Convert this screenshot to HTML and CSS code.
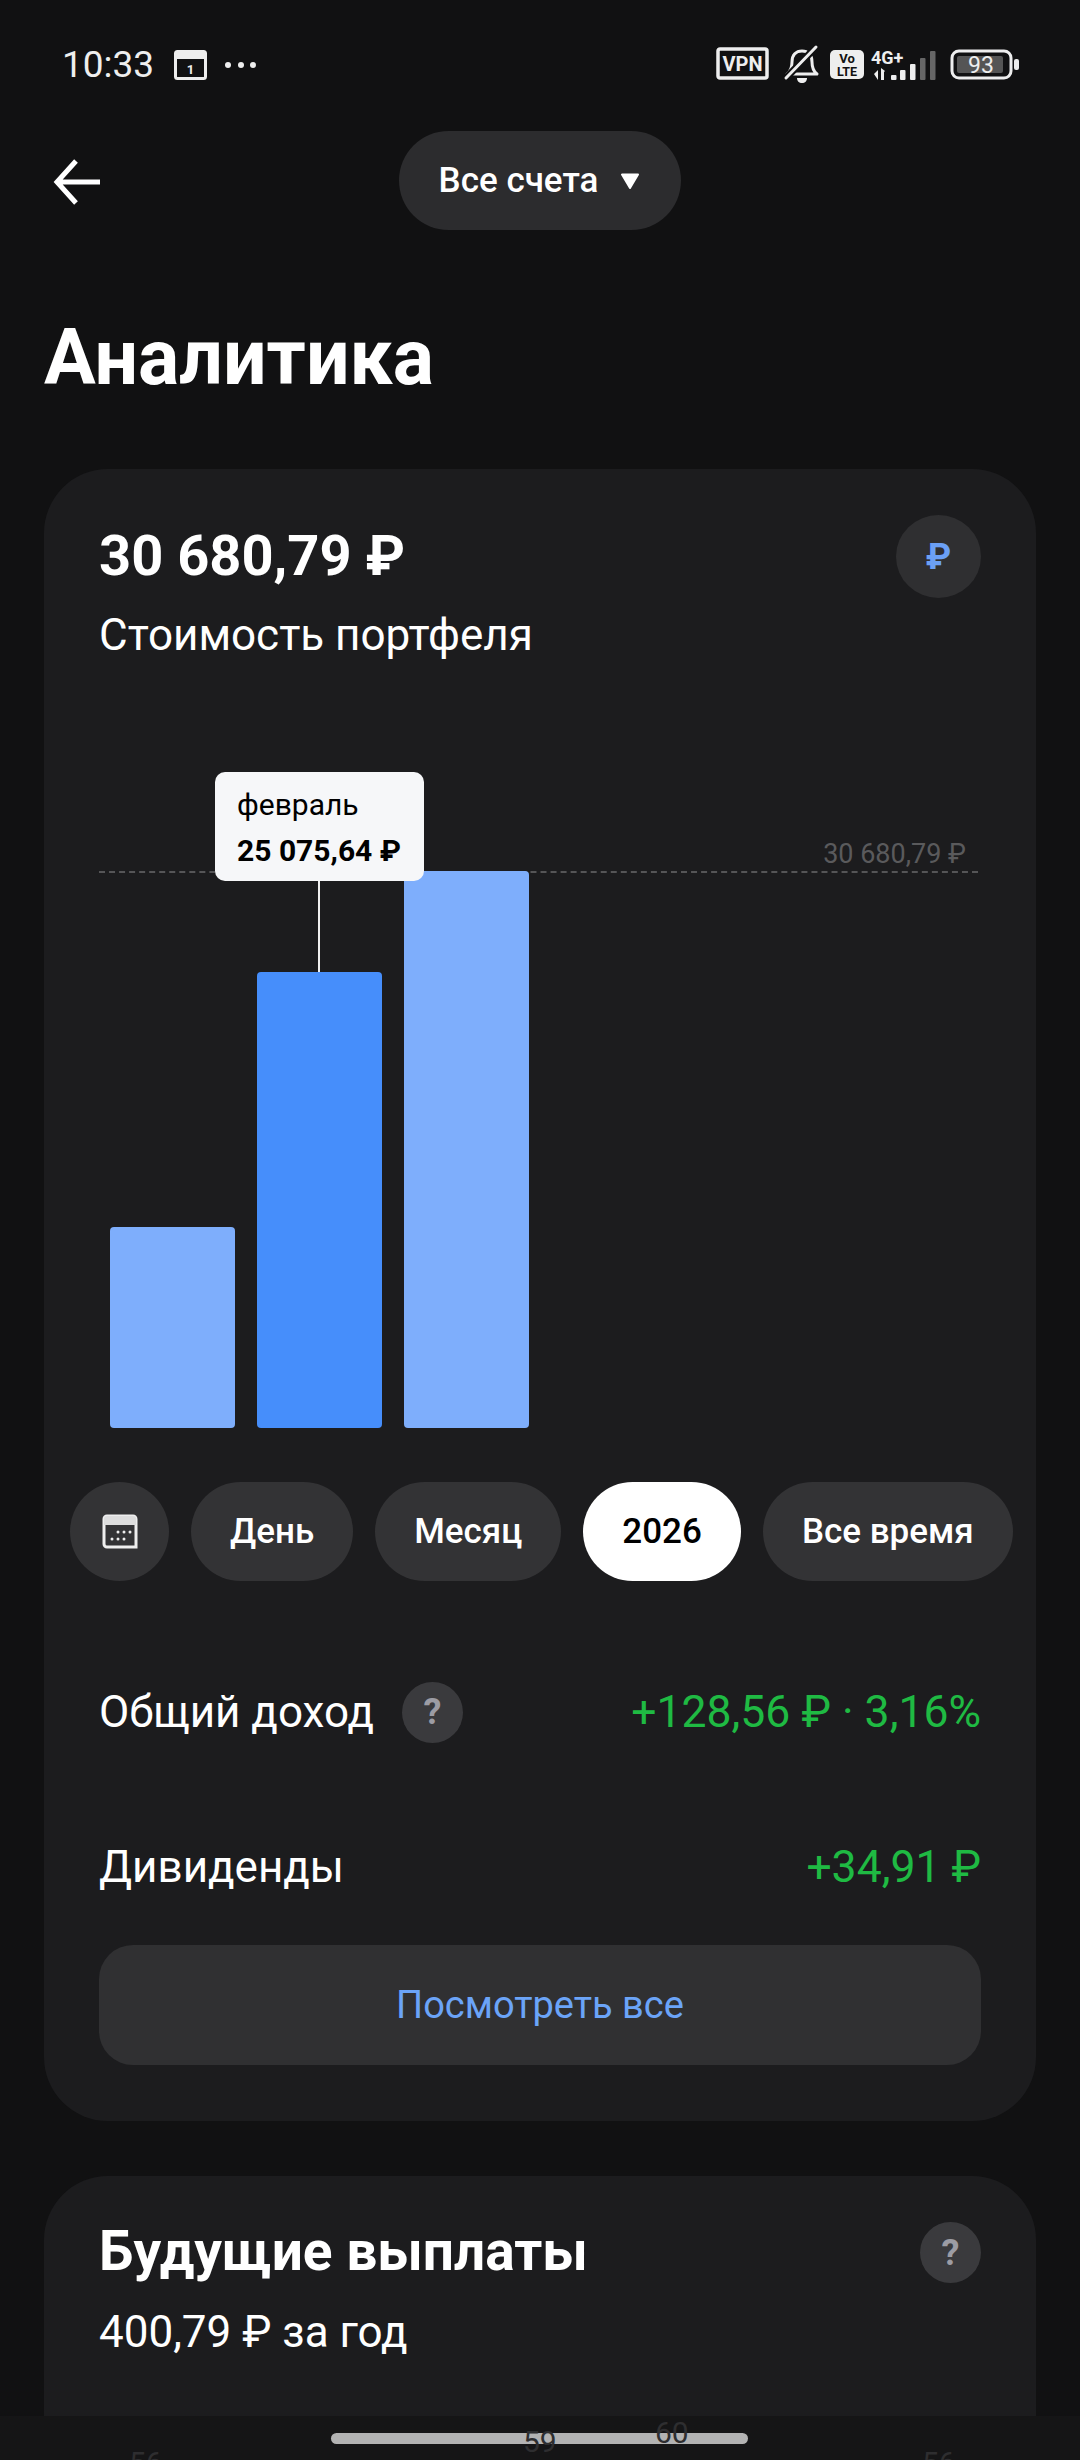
FILE: index.html
```html
<!DOCTYPE html>
<html lang="ru">
<head>
<meta charset="utf-8">
<title>Аналитика</title>
<link rel="stylesheet" href="styles.css">
</head>
<body>
<div class="page">
  <div class="status">
    <div class="status-left">
      <span class="time">10:33</span>
      <svg class="ic-cal" width="33" height="30" viewBox="0 0 33 30"><rect x="1.5" y="1.5" width="30" height="27" rx="2" fill="none" stroke="#eee" stroke-width="3"/><rect x="1" y="1" width="31" height="8" fill="#eee"/><text x="16.5" y="24" font-size="13" font-weight="700" fill="#eee" text-anchor="middle" font-family="Roboto">1</text></svg>
      <span class="dots"><i></i><i></i><i></i></span>
    </div>
    <div class="status-right">
      <svg width="53" height="33" viewBox="0 0 53 33"><rect x="2" y="2" width="49" height="29" rx="2" fill="none" stroke="#eee" stroke-width="3.5"/><text x="26.5" y="23.500" font-size="20" font-weight="700" fill="#eee" text-anchor="middle" font-family="Roboto">VPN</text></svg>
      <svg class="ic-bell" width="36" height="39" viewBox="0 0 36 39"><path d="M3 29c4-3 5-6 5-12 0-7 4-11 10-11s10 4 10 11c0 6 1 9 5 12z" fill="none" stroke="#eee" stroke-width="3" stroke-linejoin="round"/><path d="M13 33h10c0 3-2 5-5 5s-5-2-5-5z" fill="#eee"/><path d="M2 33 32 2" stroke="#111112" stroke-width="7"/><path d="M2 33 32 2" stroke="#eee" stroke-width="3" stroke-linecap="round"/></svg>
      <svg class="ic-volte" width="34" height="29" viewBox="0 0 34 29"><rect width="34" height="29" rx="5" fill="#eee"/><text x="17" y="13" font-size="13" font-weight="700" fill="#111" text-anchor="middle" font-family="Roboto">Vo</text><text x="17" y="26" font-size="12.5" font-weight="700" fill="#111" text-anchor="middle" font-family="Roboto">LTE</text></svg>
      <svg class="ic-net" width="66" height="31" viewBox="0 0 66 31"><text x="0" y="14" font-size="18" font-weight="700" fill="#eee" font-family="Roboto">4G+</text><path d="M3 24 7 20v10zM10 18l4 3-1 1v8h-3z" fill="#eee"/><rect x="20" y="25" width="5.500" height="5" rx="1" fill="#eee"/><rect x="29" y="20" width="5.500" height="10" rx="1" fill="#eee"/><rect x="39" y="14" width="5.500" height="16" rx="1" fill="#eee"/><rect x="49" y="8" width="5.500" height="22" rx="1" fill="#666"/><rect x="59" y="1" width="5.500" height="29" rx="1" fill="#666"/></svg>
      <svg class="ic-bat" width="70" height="31" viewBox="0 0 70 31"><rect x="2" y="2" width="59" height="27" rx="7" fill="none" stroke="#eee" stroke-width="3"/><rect x="7" y="7" width="46" height="17" rx="2" fill="#555"/><rect x="64" y="10" width="5" height="11" rx="2" fill="#eee"/><text x="31" y="23.500" font-size="23" fill="#eee" text-anchor="middle" font-family="Roboto">93</text></svg>
    </div>
  </div>

  <header class="topbar">
    <svg class="back" width="48" height="46" viewBox="0 0 48 46"><path d="M46 23H4M22 2 3 23l19 21" fill="none" stroke="#fff" stroke-width="5"/></svg>
    <div class="account"><span>Все счета</span><svg width="20" height="16" viewBox="0 0 20 16"><path d="M2 1.500h16L10 15z" fill="#fff" stroke="#fff" stroke-width="2" stroke-linejoin="round"/></svg></div>
  </header>

  <h1 class="title">Аналитика</h1>

  <section class="card card-main">
    <div class="head">
      <div>
        <div class="amount">30 680,79 ₽</div>
        <div class="sub">Стоимость портфеля</div>
      </div>
      <div class="cur">₽</div>
    </div>
    <div class="chart">
      <div class="limit"><span>30 680,79 ₽</span></div>
      <div class="bars">
        <div class="bar bar-1"></div>
        <div class="bar bar-2"></div>
        <div class="bar bar-3"></div>
      </div>
      <div class="stem"></div>
      <div class="tip">
        <div class="tip-m">февраль</div>
        <div class="tip-v">25 075,64 ₽</div>
      </div>
    </div>
    <div class="chips">
      <div class="chip chip-ic"><svg width="36" height="36" viewBox="0 0 36 36"><path d="M2 5a3 3 0 0 1 3-3h26a3 3 0 0 1 3 3v28H5a3 3 0 0 1-3-3z" fill="none" stroke="#eee" stroke-width="3"/><path d="M2 5a3 3 0 0 1 3-3h26a3 3 0 0 1 3 3v6H2z" fill="#ddd"/><g fill="#eee"><circle cx="16" cy="18" r="1.500"/><circle cx="22" cy="18" r="1.500"/><circle cx="28" cy="18" r="1.500"/><circle cx="10" cy="25" r="1.500"/><circle cx="16" cy="25" r="1.500"/><circle cx="22" cy="25" r="1.500"/></g></svg></div>
      <div class="chip">День</div>
      <div class="chip">Месяц</div>
      <div class="chip chip-on">2026</div>
      <div class="chip">Все время</div>
    </div>
    <div class="row row-1">
      <div class="row-l"><span>Общий доход</span><span class="q">?</span></div>
      <div class="pos">+128,56 ₽ · 3,16%</div>
    </div>
    <div class="row row-2">
      <div class="row-l"><span>Дивиденды</span></div>
      <div class="pos">+34,91 ₽</div>
    </div>
    <div class="more">Посмотреть все</div>
  </section>

  <section class="card card-next">
    <div class="head-next">
      <h2>Будущие выплаты</h2>
      <span class="q">?</span>
    </div>
    <div class="sub sub-next">400,79 ₽ за год</div>
  </section>
</div>

<div class="navbar">
  <span class="tick t1">56</span><span class="tick t2">59</span><span class="tick t3">60</span><span class="tick t4">56</span>
  <div class="pill"></div>
</div>
</body>
</html>
```
FILE: styles.css
```css
* { box-sizing: border-box; }
html, body { margin: 0; padding: 0; }
body {
  width: 1080px;
  height: 2460px;
  overflow: hidden;
  position: relative;
  background: #111112;
  color: #fff;
  font-family: Roboto, "Noto Sans", sans-serif;
}
svg { overflow: visible; flex: none; }
.page { padding: 0 44px; }

.status {
  height: 131px;
  margin: 0 16px 0 18px;
  padding: 46px 0 0;
  display: flex;
  justify-content: space-between;
  align-items: flex-start;
}
.status-left { display: flex; align-items: center; height: 36px; margin-top: 1px; }
.time { font-size: 37px; color: #eee; line-height: 36px; }
.ic-cal { margin-left: 20px; }
.dots { display: flex; gap: 6.500px; margin-left: 18px; }
.dots i { width: 6px; height: 6px; border-radius: 50%; background: #eee; }
.status-right { display: flex; align-items: flex-start; margin-top: 1px; }
.ic-bell { margin-left: 15px; margin-top: -2px; }
.ic-volte { margin-left: 10px; margin-top: 3px; }
.ic-net { margin-left: 7px; margin-top: 3px; }
.ic-bat { margin-left: 13px; margin-top: 2px; }

.topbar {
  height: 99px;
  display: flex;
  align-items: center;
  position: relative;
  justify-content: center;
}
.back { position: absolute; left: 10px; top: 28px; }
.account {
  width: 282px;
  height: 99px;
  margin-left: -1px;
  border-radius: 50px;
  background: #2c2c2e;
  display: flex;
  align-items: center;
  justify-content: center;
  gap: 22px;
  font-size: 35px;
  font-weight: 500;
}
.title {
  margin: 86px 0 0;
  font-size: 77px;
  line-height: 84px;
  font-weight: 700;
  color: #fff;
}

.card { background: #1c1c1e; border-radius: 64px; }
.card-main { margin-top: 69px; height: 1652px; padding: 46px 55px 0; }
.card-next { margin-top: 55px; height: 400px; padding: 46px 55px 0; }

.head { display: flex; justify-content: space-between; align-items: flex-start; }
.amount { font-size: 56px; line-height: 76px; font-weight: 700; margin-top: 3px; }
.sub { font-size: 44px; line-height: 60px; margin-top: 11px; color: #fff; }
.cur {
  width: 85px;
  height: 83px;
  border-radius: 50%;
  background: #2f2f31;
  color: #6ba0f5;
  display: flex;
  align-items: center;
  justify-content: center;
  font-size: 36px;
  font-weight: 700;
}

.chart { position: relative; height: 656px; margin-top: 107px; margin-right: 3px; }
.limit {
  position: absolute;
  left: 0;
  right: 0;
  top: 99px;
  border-top: 2px dashed #555557;
}
.limit span {
  position: absolute;
  right: 12px;
  bottom: 0;
  font-size: 27px;
  line-height: 38px;
  color: #5a5a5c;
}
.bars {
  position: absolute;
  left: 11px;
  right: 0;
  top: 0;
  bottom: 0;
  display: flex;
  align-items: flex-end;
  gap: 22px;
}
.bar { width: 125px; border-radius: 4px; background: #7eaefc; }
.bar-1 { height: 201px; }
.bar-2 { height: 456px; background: #468efb; }
.bar-3 { height: 557px; }
.stem {
  position: absolute;
  left: 219px;
  top: 100px;
  width: 2px;
  height: 100px;
  background: #f0f0f0;
}
.tip {
  position: absolute;
  left: 116px;
  top: 0;
  width: 209px;
  height: 109px;
  padding: 10px 0 0 22px;
  border-radius: 10px;
  background: #f6f7f9;
  color: #000;
  font-size: 30px;
  line-height: 46px;
}
.tip-v { font-weight: 700; }

.chips {
  display: flex;
  gap: 22px;
  margin: 54px -33px 0 -29px;
}
.chip {
  height: 99px;
  padding: 0 39px;
  border-radius: 50px;
  background: #333335;
  display: flex;
  align-items: center;
  font-size: 35px;
  font-weight: 500;
}
.chip-ic { width: 99px; padding: 0; justify-content: center; }
.chip-on { background: #fff; color: #000; }

.row { display: flex; justify-content: space-between; align-items: center; font-size: 44px; height: 62px; }
.row-1 { margin-top: 100px; }
.row-2 { margin-top: 93px; }
.row-l { display: flex; align-items: center; gap: 28px; }
.pos { color: #1fba43; font-size: 44.500px; }
.q {
  width: 61px;
  height: 61px;
  border-radius: 50%;
  background: #3a3a3d;
  color: #9c9ca4;
  display: flex;
  align-items: center;
  justify-content: center;
  font-size: 36px;
  font-weight: 700;
}
.more {
  height: 120px;
  margin-top: 47px;
  border-radius: 34px;
  background: #303032;
  color: #6ba4f8;
  display: flex;
  align-items: center;
  justify-content: center;
  font-size: 38px;
}

.head-next { display: flex; justify-content: space-between; align-items: flex-start; }
.head-next h2 { margin: -1px 0 1px; font-size: 55px; line-height: 60px; font-weight: 700; }
.sub-next { margin-top: 19px; }

.navbar {
  position: absolute;
  left: 0;
  right: 0;
  top: 2416px;
  bottom: 0;
  background: #151516;
}
.pill {
  position: absolute;
  left: 331px;
  top: 17px;
  width: 417px;
  height: 11px;
  border-radius: 6px;
  background: #b3b3b3;
}
.tick { position: absolute; font-size: 30px; color: #2e2e30; line-height: 30px; z-index: 1; }
.t1 { left: 129px; top: 32px; }
.t2 { left: 523px; top: 11px; }
.t3 { left: 655px; top: 2px; }
.t4 { left: 922px; top: 32px; }
```
